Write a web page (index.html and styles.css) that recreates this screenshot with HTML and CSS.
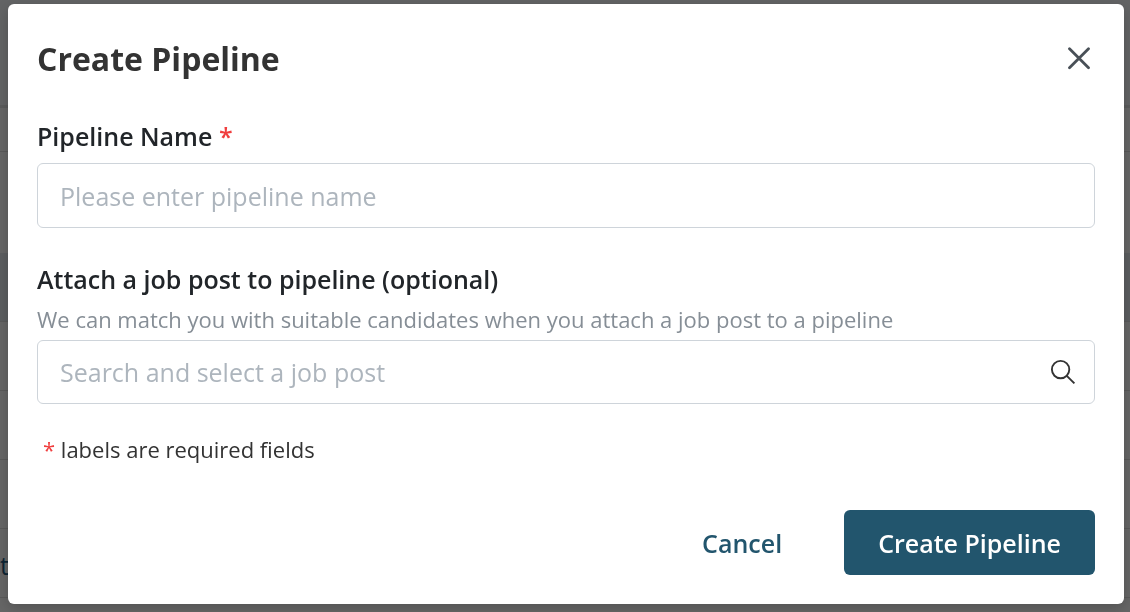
FILE: index.html
```html
<!DOCTYPE html>
<html lang="en">

<head>
    <meta charset="utf-8">
    <meta name="viewport" content="width=device-width, initial-scale=1.0">
    <title>Create Pipeline</title>
    <link rel="stylesheet" href="styles.css">
</head>

<body>
    <!-- page behind the modal -->
    <div class="page">
        <div class="page-header"></div>
        <div class="page-toolbar"></div>
        <div class="page-row page-row-tall"></div>
        <div class="page-row page-row-active"></div>
        <div class="page-row"></div>
        <div class="page-row"></div>
        <div class="page-row"></div>
        <div class="page-row">t</div>
        <div class="page-row"></div>
    </div>

    <div class="overlay">
        <form class="modal" role="dialog" aria-labelledby="modal-title">
            <div class="modal-header">
                <h1 class="modal-title" id="modal-title">Create Pipeline</h1>
                <button class="close" type="button" aria-label="Close">
                    <svg width="24" height="24" viewBox="0 0 24 24" fill="none" stroke="currentColor" stroke-width="2.8" stroke-linecap="round">
                        <path d="M2.5 1.7l19 19M21.5 1.7l-19 19" />
                    </svg>
                </button>
            </div>

            <div class="field">
                <label class="label" for="pipeline-name">Pipeline Name <span class="required">*</span></label>
                <input class="input" id="pipeline-name" type="text" placeholder="Please enter pipeline name">
            </div>

            <div class="field">
                <label class="label" for="job-post">Attach a job post to pipeline (optional)</label>
                <p class="hint" id="job-post-hint">We can match you with suitable candidates when you attach a job post to a pipeline</p>
                <div class="search">
                    <input class="search-input" id="job-post" type="text" placeholder="Search and select a job post" aria-describedby="job-post-hint">
                    <svg width="26" height="26" viewBox="0 0 26 26" fill="none" stroke="currentColor" stroke-width="1.9">
                        <circle cx="10.6" cy="10.6" r="8.7" />
                        <path d="M16.8 16.8l7.6 7.6" />
                    </svg>
                </div>
            </div>

            <p class="note"><span class="required">*</span> labels are required fields</p>

            <div class="actions">
                <button class="btn btn-link" type="button">Cancel</button>
                <button class="btn btn-primary" type="submit">Create Pipeline</button>
            </div>
        </form>
    </div>
</body>

</html>
```
FILE: styles.css
```css
* {
    box-sizing: border-box;
}

body {
    margin: 0;
    overflow: hidden;
    font-family: "Open Sans", "Noto Sans", sans-serif;
    color: #333;
    background: #666;
}

h1,
p {
    margin: 0;
}

/* PAGE */
.page {
    height: 100vh;
    overflow: hidden;
}

.page-header {
    height: 108px;
    background: #636465;
    border-bottom: 3px solid #5b5c5c;
}

.page-toolbar {
    height: 44px;
    border-bottom: 1px solid #595959;
}

.page-row {
    height: 69px;
    border-bottom: 1px solid #5a5a5a;
    font-size: 25px;
    line-height: 72px;
    color: #0d2433;
}

.page-row-tall {
    height: 101px;
    border-bottom: 0;
}

.page-row-active {
    background: #5c5e60;
}

/* MODAL */
.overlay {
    position: fixed;
    inset: 0;
    padding: 4px 6px 8px 8px;
}

.modal {
    padding: 29px;
    border-radius: 6px;
    background: #fff;
    box-shadow: 0 4px 14px rgba(0, 0, 0, 0.2);
}

.modal-header {
    display: flex;
    justify-content: space-between;
    align-items: center;
    height: 52px;
    margin-bottom: 32px;
}

.modal-title {
    font-size: 32px;
    line-height: 52px;
    font-weight: 700;
}

.close {
    display: flex;
    padding: 4px;
    border: 0;
    background: none;
    color: #495057;
}

.field {
    margin-bottom: 32px;
}

.label {
    display: block;
    margin-bottom: 8px;
    font-size: 25px;
    line-height: 38px;
    font-weight: 600;
    color: #212529;
}

.required {
    color: #f03e3e;
}

.input,
.search {
    width: 100%;
    height: 65px;
    padding: 0 22px;
    border: 1px solid #ced4da;
    border-radius: 6px;
    background: #fff;
}

.input,
.search-input {
    font-family: inherit;
    font-size: 25px;
    color: #212529;
}

.input::placeholder,
.search-input::placeholder {
    color: #adb5bd;
    opacity: 1;
}

.search {
    display: flex;
    align-items: center;
    height: 64px;
    padding-right: 18px;
}

.search-input {
    flex: 1;
    min-width: 0;
    padding: 0;
    border: 0;
    outline: 0;
    background: none;
}

.hint {
    margin-bottom: 8px;
    font-size: 22px;
    line-height: 26px;
    color: #868e96;
}

.note {
    padding-left: 6px;
    font-size: 22px;
    line-height: 26px;
}

.actions {
    display: flex;
    justify-content: flex-end;
    gap: 28px;
    margin-top: 48px;
}

.btn {
    height: 65px;
    padding: 0 34px;
    border: 0;
    border-radius: 6px;
    font-family: inherit;
    font-size: 25px;
    font-weight: 600;
}

.btn-link {
    background: none;
    color: #22556d;
}

.btn-primary {
    background: #22556d;
    color: #fff;
}
```
